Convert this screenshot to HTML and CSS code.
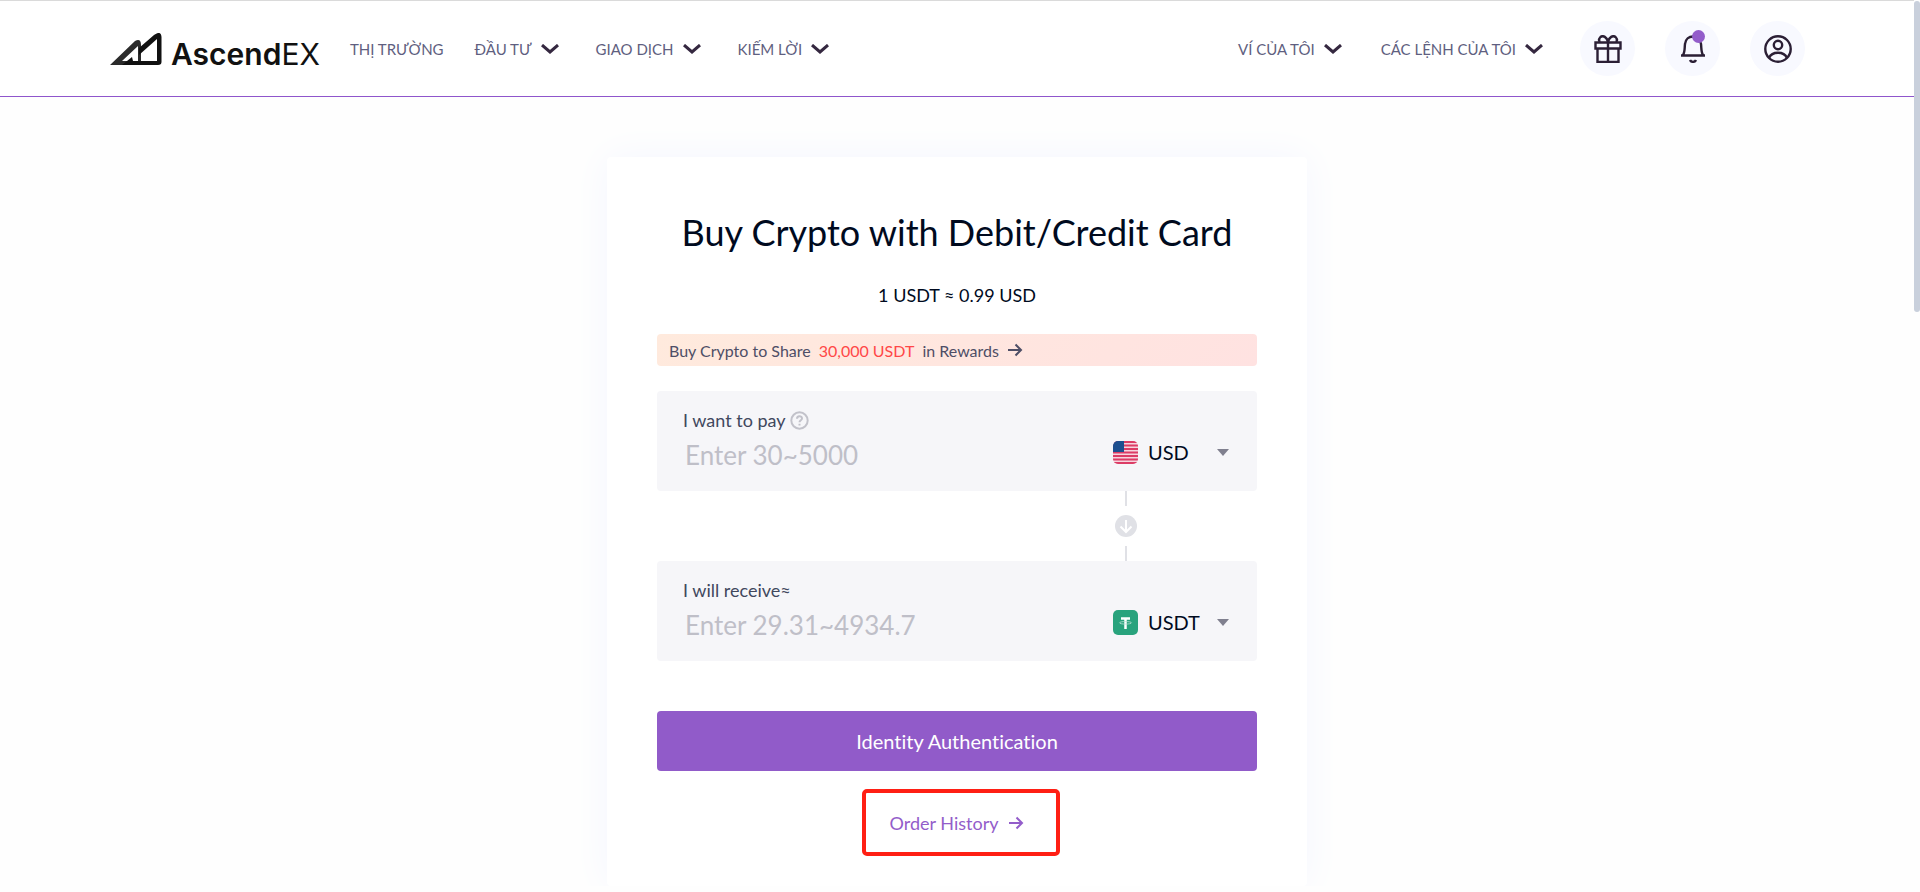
FILE: index.html
```html
<!DOCTYPE html>
<html lang="vi">
<head>
    <meta charset="UTF-8">
    <meta name="viewport" content="width=device-width, initial-scale=1.0">
    <title>AscendEX</title>
    <link rel="stylesheet" href="styles.css">
</head>
<body>
    <header class="header">
        <a class="logo" href="#">
            <svg class="logo-mark" width="52" height="32" viewBox="0 0 52 32">
                <path d="M0 32 L25 8 Q31 5 31 12 V32 Z M12 28 H28 V13 Z" fill="#2b2b2b" fill-rule="evenodd"/>
                <path d="M29 15 L44 2 Q51 -3 51.500 4 V29 Q51.500 32 48 32 H12 L22 24 L23 28 H47 V6 L29 22 Z" fill="#111" fill-rule="evenodd"/>
            </svg>
            <span class="logo-text">Ascend<span class="logo-thin">EX</span></span>
        </a>
        <nav class="nav">
            <a class="nav-item" href="#">THỊ TRƯỜNG</a>
            <button class="nav-item" type="button">ĐẦU TƯ <svg class="chevron" viewBox="0 0 18 10"><path d="M1 1 L9 8 L17 1"/></svg></button>
            <button class="nav-item" type="button">GIAO DỊCH <svg class="chevron" viewBox="0 0 18 10"><path d="M1 1 L9 8 L17 1"/></svg></button>
            <button class="nav-item" type="button">KIẾM LỜI <svg class="chevron" viewBox="0 0 18 10"><path d="M1 1 L9 8 L17 1"/></svg></button>
        </nav>
        <nav class="nav nav-right">
            <button class="nav-item" type="button">VÍ CỦA TÔI <svg class="chevron" viewBox="0 0 18 10"><path d="M1 1 L9 8 L17 1"/></svg></button>
            <button class="nav-item" type="button">CÁC LỆNH CỦA TÔI <svg class="chevron" viewBox="0 0 18 10"><path d="M1 1 L9 8 L17 1"/></svg></button>
        </nav>
        <div class="actions">
            <button class="round" type="button" aria-label="Rewards">
                <svg width="28" height="28" viewBox="0 0 28 28">
                    <path d="M1.500 7.500 H26.500 V13.500 H1.500 Z M3.500 13.500 V27 H24.500 V13.500 M14 7.500 V27"/>
                    <path d="M14 7 C13 2 9 0 6.500 2 C4.500 4 5 6 6 7 M14 7 C15 2 19 0 21.500 2 C23.500 4 23 6 22 7"/>
                </svg>
            </button>
            <button class="round" type="button" aria-label="Notifications">
                <svg width="28" height="28" viewBox="0 0 28 28">
                    <path d="M2 20.500 H26 M4 20 C6 17 5.500 13 6 9 C6.500 4 10 1.500 14 1.500 C18 1.500 21.500 4 22 9 C22.500 13 22 17 24 20"/>
                    <path d="M11 25 C12 27.500 16 27.500 17 25"/>
                </svg>
                <span class="dot"></span>
            </button>
            <button class="round" type="button" aria-label="Account">
                <svg width="28" height="28" viewBox="0 0 28 28">
                    <circle cx="14" cy="14" r="12.700"/>
                    <circle cx="14" cy="10" r="4.200"/>
                    <path d="M5 23 C8 16 20 16 23 23"/>
                </svg>
            </button>
        </div>
    </header>

    <main class="main">
        <form class="card">
            <h1>Buy Crypto with Debit/Credit Card</h1>
            <p class="rate">1 USDT ≈ 0.99 USD</p>
            <a class="banner" href="#">
                <span>Buy Crypto to Share</span>
                <span class="amount">30,000 USDT</span>
                <span>in Rewards</span>
                <svg class="arrow" viewBox="0 0 16 14"><path d="M1 7 H14 M8.500 1.500 L14 7 L8.500 12.500"/></svg>
            </a>

            <div class="box">
                <div class="field">
                    <label for="pay">I want to pay
                        <svg width="19" height="19" viewBox="0 0 19 19" fill="none" stroke="#c2c2ca" stroke-width="2">
                            <circle cx="9.500" cy="9.500" r="8.200"/>
                            <path d="M7 7.800 C7 4.500 12 4.500 12 7.500 C12 9.300 9.500 9.200 9.500 11.300 M9.500 12.700 V14.500"/>
                        </svg>
                    </label>
                    <input id="pay" type="text" placeholder="Enter 30~5000">
                </div>
                <div class="currency">
                    <svg width="25" height="25" viewBox="0 0 25 25">
                        <defs><clipPath id="flag"><rect y="1" width="25" height="23" rx="5"/></clipPath></defs>
                        <g clip-path="url(#flag)">
                            <rect width="25" height="25" fill="#f6d5de"/>
                            <path d="M0 2 H25 M0 5.500 H25 M0 9 H25 M0 12.500 H25 M0 16 H25 M0 19.500 H25 M0 23 H25" stroke="#dc3c66" stroke-width="2"/>
                            <rect width="11" height="12" fill="#1d4f8f"/>
                        </g>
                    </svg>
                    <select aria-label="Pay currency"><option>USD</option></select>
                    <svg class="caret" viewBox="0 0 12 7"><path d="M0 0 H12 L6 7 Z"/></svg>
                </div>
            </div>

            <div class="swap">
                <span class="line"></span>
                <svg width="22" height="22" viewBox="0 0 22 22">
                    <circle cx="11" cy="11" r="11" fill="#e0e1e6"/>
                    <path d="M11 5 V16.500 M5.500 11.500 L11 17 L16.500 11.500" fill="none" stroke="#fff" stroke-width="2"/>
                </svg>
                <span class="line"></span>
            </div>

            <div class="box">
                <div class="field">
                    <label for="receive">I will receive≈</label>
                    <input id="receive" type="text" placeholder="Enter 29.31~4934.7">
                </div>
                <div class="currency">
                    <svg width="25" height="25" viewBox="0 0 25 25">
                        <rect width="25" height="25" rx="5" fill="#29a37d"/>
                        <path d="M8 8.500 H17 M12.500 8.500 V19" stroke="#fff" stroke-width="2.500" fill="none"/>
                        <ellipse cx="12.500" cy="12.800" rx="6" ry="1.300" fill="none" stroke="#b5e0d2" stroke-width="0.800"/>
                    </svg>
                    <select aria-label="Receive currency"><option>USDT</option></select>
                    <svg class="caret" viewBox="0 0 12 7"><path d="M0 0 H12 L6 7 Z"/></svg>
                </div>
            </div>

            <button class="submit" type="button">Identity Authentication</button>
            <a class="history" href="#">Order History
                <svg class="arrow" viewBox="0 0 16 14"><path d="M1 7 H14 M8.500 1.500 L14 7 L8.500 12.500"/></svg>
            </a>
        </form>
    </main>
    <div class="scroll-thumb"></div>
</body>
</html>
```

FILE: styles.css
```css
* {
    box-sizing: border-box;
}
body {
    margin: 0;
    padding-right: 6px;
    font-family: Lato, "Open Sans", sans-serif;
    font-variant-ligatures: none;
    background: #fefefe;
    color: #000a1e;
}
a {
    text-decoration: none;
}
button, input, select {
    font-family: inherit;
    font-variant-ligatures: none;
    border: none;
    background: none;
    padding: 0;
}
button {
    cursor: pointer;
}
.header {
    display: flex;
    align-items: center;
    height: 97px;
    padding: 0 109px 0 110px;
    border-top: 1px solid #dadada;
    border-bottom: 1px solid #8f55cc;
    background: #fff;
}
.logo {
    display: flex;
    align-items: flex-end;
    gap: 9px;
    margin-right: 30px;
    color: #111;
}
.logo-text {
    font-family: Inter, sans-serif;
    font-size: 30px;
    line-height: 26px;
    height: 24px;
    font-weight: 600;
}
.logo-thin {
    font-weight: 400;
}
.nav {
    display: flex;
    gap: 37px;
}
.nav-right {
    gap: 39px;
    margin-left: auto;
    margin-right: 37px;
}
.nav-item {
    display: flex;
    align-items: center;
    gap: 9px;
    font-size: 15px;
    line-height: 20px;
    color: #5f5f80;
    white-space: nowrap;
}
.nav a.nav-item {
    margin-right: -6px;
}
.chevron {
    width: 18px;
    height: 10px;
    fill: none;
    stroke: #352840;
    stroke-width: 3;
}
.actions {
    display: flex;
    gap: 30px;
}
.round {
    position: relative;
    display: flex;
    align-items: center;
    justify-content: center;
    width: 55px;
    height: 55px;
    border-radius: 50%;
    background: #f8f9ff;
}
.round svg {
    fill: none;
    stroke: #2b1f35;
    stroke-width: 2.4;
}
.dot {
    position: absolute;
    top: 9px;
    right: 15px;
    width: 13px;
    height: 13px;
    border-radius: 50%;
    background: #935dca;
}
.main {
    display: flex;
    justify-content: center;
    padding: 60px 20px 0;
}
.card {
    display: flex;
    flex-direction: column;
    width: 100%;
    max-width: 700px;
    padding: 50px 50px 30px;
    border-radius: 4px;
    background: #fff;
    box-shadow: 0 0 40px #f5f7fe;
}
h1 {
    margin: 0;
    font-size: 36px;
    font-weight: 400;
    line-height: 50px;
    text-align: center;
}
.rate {
    margin: 27px 0 28px;
    font-size: 18px;
    line-height: 22px;
    text-align: center;
}
.banner {
    display: flex;
    align-items: center;
    gap: 8px;
    height: 32px;
    margin-bottom: 25px;
    padding: 0 12px;
    border-radius: 4px;
    background: linear-gradient(135deg, #ffeadd, #ffe2e1);
    font-size: 16px;
    color: #4e4e66;
}
.amount {
    color: #ff4747;
}
.arrow {
    width: 16px;
    height: 14px;
    fill: none;
    stroke: currentColor;
    stroke-width: 2;
}
.box {
    display: flex;
    align-items: flex-start;
    height: 100px;
    padding: 18px 28px 0 26px;
    border-radius: 4px;
    background: #f6f6f9;
}
.field {
    flex: 1;
}
.field label {
    display: flex;
    align-items: center;
    gap: 4px;
    height: 22px;
    font-size: 18px;
    color: #41485e;
}
.field input {
    width: 100%;
    height: 40px;
    margin-top: 4px;
    padding: 0 2px;
    font-size: 26px;
    outline: none;
}
.field input::placeholder {
    color: #bfbfc8;
}
.currency {
    display: flex;
    align-items: center;
    width: 116px;
    margin-top: 30px;
}
.currency select {
    flex: 1;
    margin-left: 10px;
    appearance: none;
    font-size: 20px;
    line-height: 26px;
    color: #000a1e;
}
.caret {
    width: 12px;
    height: 7px;
    fill: #80808f;
}
.swap {
    display: flex;
    flex-direction: column;
    align-items: center;
    align-self: flex-end;
    justify-content: space-between;
    width: 22px;
    height: 70px;
    margin-right: 120px;
}
.line {
    width: 2px;
    height: 15px;
    background: #e0e1e6;
}
.submit {
    height: 60px;
    margin: 50px 0 18px;
    border-radius: 4px;
    background: #915bc9;
    font-size: 20px;
    color: #fff;
}
.history {
    display: flex;
    align-items: center;
    align-self: center;
    gap: 10px;
    height: 67px;
    margin-left: 8px;
    padding: 0 32px 0 24px;
    border: 4px solid #ff1f14;
    border-radius: 5px;
    font-size: 18px;
    color: #935dca;
}
.scroll-thumb {
    position: fixed;
    top: 1px;
    right: 0;
    width: 6px;
    height: 311px;
    border-radius: 3px;
    background: #c9d0dc;
}
```
